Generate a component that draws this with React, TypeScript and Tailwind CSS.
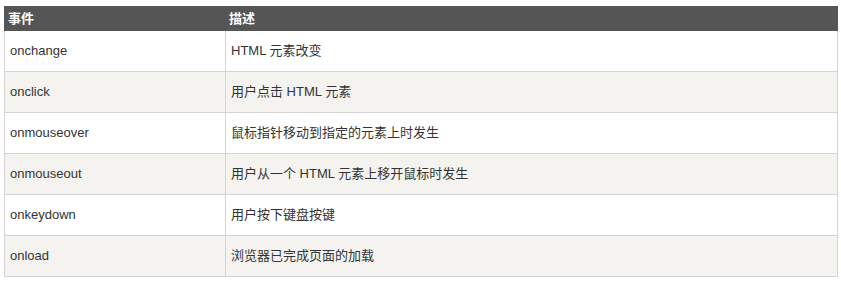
const rows = [
  { event: "onchange", desc: "HTML 元素改变" },
  { event: "onclick", desc: "用户点击 HTML 元素" },
  { event: "onmouseover", desc: "鼠标指针移动到指定的元素上时发生" },
  { event: "onmouseout", desc: "用户从一个 HTML 元素上移开鼠标时发生" },
  { event: "onkeydown", desc: "用户按下键盘按键" },
  { event: "onload", desc: "浏览器已完成页面的加载" },
]

export default function App() {
  return (
    <div className="min-h-screen bg-white pt-[6px] pl-[4px] font-['Liberation_Sans','Noto_Sans_CJK_SC',sans-serif] text-[13px]">
      <div className="w-[834px]">
        <div className="flex h-[25px] items-center bg-[#555555] font-bold text-white">
          <div className="w-[222px] pl-[4px]">事件</div>
          <div className="flex-1 pl-[3px]">描述</div>
        </div>
        {rows.map((row, i) => (
          <div
            key={row.event}
            className={`flex h-[41px] border-x border-b border-[#d4d4d4] text-[#333333] ${
              i % 2 === 1 ? "bg-[#f4f3ef]" : "bg-white"
            }`}
          >
            <div className="flex w-[221px] items-center border-r border-[#d4d4d4] pl-[5px]">{row.event}</div>
            <div className="flex flex-1 items-center pl-[5px]">{row.desc}</div>
          </div>
        ))}
      </div>
    </div>
  )
}
